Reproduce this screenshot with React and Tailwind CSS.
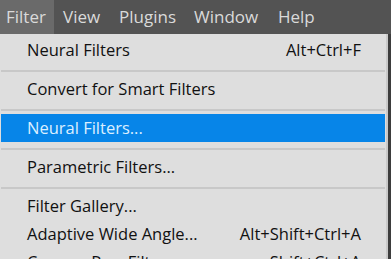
import React from 'react';

const menus = [
  { name: 'Filter', w: 'w-[54px] pl-[6px] bg-[#6a6a6a]' },
  { name: 'View', w: 'w-[56px] pl-[8px] ml-[1px]' },
  { name: 'Plugins', w: 'w-[75px] pl-[8px]' },
  { name: 'Window', w: 'w-[84px] pl-[8px]' },
  { name: 'Help', w: 'w-[50px] pl-[8px]' },
];

const items = [
  { label: 'Neural Filters', shortcut: 'Alt+Ctrl+F' },
  { sep: true },
  { label: 'Convert for Smart Filters' },
  { sep: true },
  { label: 'Neural Filters...', active: true },
  { sep: true },
  { label: 'Parametric Filters...' },
  { sep: true },
  { label: 'Filter Gallery...' },
  { label: 'Adaptive Wide Angle...', shortcut: 'Alt+Shift+Ctrl+A' },
  { label: 'Camera Raw Filter...', shortcut: 'Shift+Ctrl+A' },
];

export default function App() {
  return (
    <div
      className="w-[391px] h-[259px] overflow-hidden bg-[#3d3d3d] flex flex-col"
      style={{ fontFamily: '"Open Sans", "Noto Sans", sans-serif' }}
    >
      <div className="h-[34px] shrink-0 bg-[#535353] flex items-stretch text-[17px] text-[#dadada]">
        {menus.map((m) => (
          <div key={m.name} className={`flex items-center ${m.w}`}>
            {m.name}
          </div>
        ))}
      </div>
      <div className="w-[388px] flex-1 bg-[#dedede] border-r-2 border-[#c9c9c9] pt-[2px] pl-[1px] pr-[1px] text-[16.5px] text-[#111]">
        {items.map((it, i) =>
          it.sep ? (
            <div key={i} className="h-[11px] pt-[6px]">
              <div className="h-[2px] w-full bg-[#c8c8c8]" />
            </div>
          ) : (
            <div
              key={i}
              className={`h-[28px] shrink-0 flex items-center justify-between pl-[26px] pr-[24px] pt-[1px] ${
                it.active ? 'bg-[#0785e8] text-[#dcefff]' : ''
              }`}
            >
              <span className="whitespace-nowrap">{it.label}</span>
              {it.shortcut && <span className="whitespace-nowrap">{it.shortcut}</span>}
            </div>
          )
        )}
      </div>
    </div>
  );
}
